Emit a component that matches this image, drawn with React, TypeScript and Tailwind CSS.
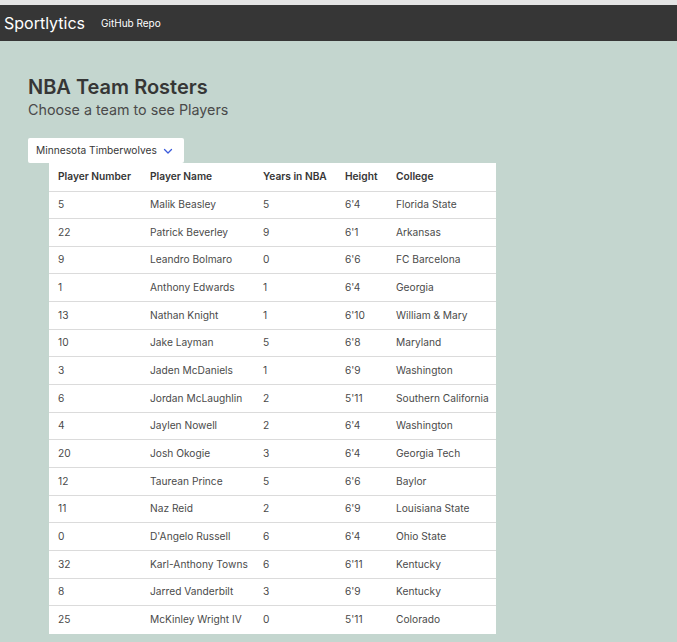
const players = [
  ["5", "Malik Beasley", "5", "6'4", "Florida State"],
  ["22", "Patrick Beverley", "9", "6'1", "Arkansas"],
  ["9", "Leandro Bolmaro", "0", "6'6", "FC Barcelona"],
  ["1", "Anthony Edwards", "1", "6'4", "Georgia"],
  ["13", "Nathan Knight", "1", "6'10", "William & Mary"],
  ["10", "Jake Layman", "5", "6'8", "Maryland"],
  ["3", "Jaden McDaniels", "1", "6'9", "Washington"],
  ["6", "Jordan McLaughlin", "2", "5'11", "Southern California"],
  ["4", "Jaylen Nowell", "2", "6'4", "Washington"],
  ["20", "Josh Okogie", "3", "6'4", "Georgia Tech"],
  ["12", "Taurean Prince", "5", "6'6", "Baylor"],
  ["11", "Naz Reid", "2", "6'9", "Louisiana State"],
  ["0", "D'Angelo Russell", "6", "6'4", "Ohio State"],
  ["32", "Karl-Anthony Towns", "6", "6'11", "Kentucky"],
  ["8", "Jarred Vanderbilt", "3", "6'9", "Kentucky"],
  ["25", "McKinley Wright IV", "0", "5'11", "Colorado"],
];

function Chevron() {
  return (
    <svg width={10} height={10} viewBox="0 0 10 10" fill="none" aria-hidden className="text-[#3b5bdb]">
      <path d="M1.5 3.5L5 7l3.5-3.5" stroke="currentColor" strokeWidth={1.3} strokeLinecap="round" strokeLinejoin="round" />
    </svg>
  );
}

export default function App() {
  return (
    <div
      className="min-h-[642px] bg-[#c4d6cf] text-[#363636]"
      style={{ fontFamily: "Inter, 'Liberation Sans', sans-serif" }}
    >
      <div className="h-[5px] bg-[#e4e4e4]" />
      <nav className="flex h-[36px] items-center bg-[#363636] pl-[4px]">
        <span className="text-[16px] text-white">Sportlytics</span>
        <span className="ml-[16px] text-[10px] text-white">GitHub Repo</span>
      </nav>

      <main className="px-[28px] pt-[34px]">
        <h1 className="text-[20px] font-semibold leading-[24px] text-[#363636]">NBA Team Rosters</h1>
        <p className="text-[14.3px] leading-[22px] text-[#4a4a4a]">Choose a team to see Players</p>

        <div className="mt-[17px] flex h-[25px] w-[156px] items-center gap-[6px] rounded-[2px] bg-white pl-[8px] text-[10.2px] text-[#363636]">
          <span>Minnesota Timberwolves</span>
          <Chevron />
        </div>

        <table className="ml-[21px] w-[447px] table-fixed border-collapse bg-white text-[10.2px]">
          <colgroup>
            <col className="w-[92px]" />
            <col className="w-[113px]" />
            <col className="w-[82px]" />
            <col className="w-[51px]" />
            <col className="w-[109px]" />
          </colgroup>
          <thead>
            <tr className="h-[28px] border-b border-[#dbdbdb]">
              {["Player Number", "Player Name", "Years in NBA", "Height", "College"].map((h) => (
                <th key={h} className="pl-[9px] text-left font-semibold text-[#363636]">
                  {h}
                </th>
              ))}
            </tr>
          </thead>
          <tbody>
            {players.map((p, i) => (
              <tr key={p[1]} className={`h-[27.67px] ${i < players.length - 1 ? "border-b border-[#dbdbdb]" : ""}`}>
                {p.map((c, j) => (
                  <td key={j} className="whitespace-nowrap pl-[9px] text-[#4a4a4a]">
                    {c}
                  </td>
                ))}
              </tr>
            ))}
          </tbody>
        </table>
      </main>
    </div>
  );
}
